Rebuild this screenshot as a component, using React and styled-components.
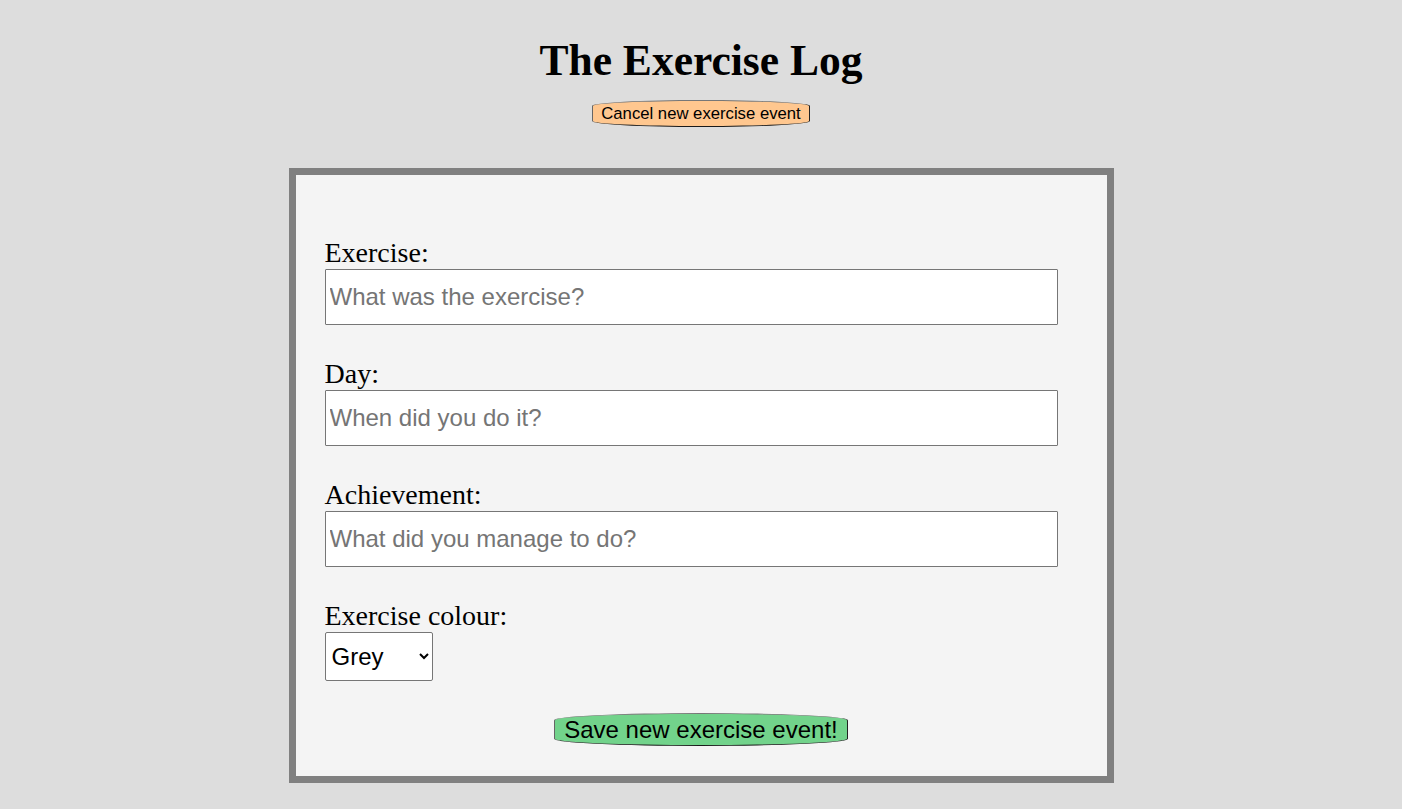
import React, { useState } from "react";
import styled, { createGlobalStyle } from "styled-components";

const GlobalStyle = createGlobalStyle`
  html, body {
    margin: 0;
    padding: 0;
    background: #dddddd;
    font-family: "Liberation Serif", "Times New Roman", serif;
  }
`;

const Page = styled.div`
  display: flex;
  flex-direction: column;
  align-items: center;
  min-height: 809px;
`;

const Title = styled.h1`
  margin: 36px 0 15px;
  font-size: 43.5px;
  font-weight: bold;
  line-height: 49px;
  color: #000;
`;

const PillButton = styled.button`
  font-family: "Liberation Sans", Arial, sans-serif;
  font-size: ${(p) => (p.$big ? "24px" : "16.7px")};
  line-height: ${(p) => (p.$big ? "28px" : "19px")};
  padding: ${(p) => (p.$big ? "1.5px 9px" : "3px 8.5px")};
  background: ${(p) => p.$bg};
  color: #000;
  border-style: solid;
  border-width: 1px 1.5px 1.5px 1px;
  border-color: #777 #222 #1a1a1a #666;
  border-radius: 50% / 22%;
  cursor: pointer;
`;

const FormBox = styled.form`
  box-sizing: border-box;
  width: 825px;
  margin-top: 41px;
  padding: 29px 49px 30px 29px;
  background: #f4f4f4;
  border: 7px solid #808080;
  display: flex;
  flex-direction: column;
`;

const Field = styled.div`
  display: flex;
  flex-direction: column;
  align-items: flex-start;
  margin-top: 33px;
`;

const Label = styled.label`
  font-size: 28px;
  line-height: 32px;
  color: #000;
`;

const TextInput = styled.input`
  box-sizing: border-box;
  width: 733px;
  height: 56px;
  padding: 0 4px;
  font-family: "Liberation Sans", Arial, sans-serif;
  font-size: 24px;
  background: #fff;
  border: 1px solid #767676;
  border-radius: 1px;
  outline: none;
  &::placeholder {
    color: #757575;
  }
`;

const ColourSelect = styled.select`
  box-sizing: border-box;
  width: 108px;
  height: 49px;
  padding: 0 2px;
  font-family: "Liberation Sans", Arial, sans-serif;
  font-size: 24px;
  color: #000;
  background: #fff;
  border: 1px solid #767676;
  border-radius: 2px;
`;

const Actions = styled.div`
  display: flex;
  justify-content: center;
  margin-top: 32px;
  padding-left: 20px;
`;

export default function App() {
  const [colour, setColour] = useState("grey");

  return (
    <Page>
      <GlobalStyle />
      <Title>The Exercise Log</Title>
      <PillButton type="button" $bg="#ffc78f">
        Cancel new exercise event
      </PillButton>
      <FormBox onSubmit={(e) => e.preventDefault()}>
        <Field>
          <Label htmlFor="exercise">Exercise:</Label>
          <TextInput id="exercise" placeholder="What was the exercise?" />
        </Field>
        <Field>
          <Label htmlFor="day">Day:</Label>
          <TextInput id="day" placeholder="When did you do it?" />
        </Field>
        <Field>
          <Label htmlFor="achievement">Achievement:</Label>
          <TextInput id="achievement" placeholder="What did you manage to do?" />
        </Field>
        <Field>
          <Label htmlFor="colour">Exercise colour:</Label>
          <ColourSelect
            id="colour"
            value={colour}
            onChange={(e) => setColour(e.target.value)}
          >
            <option value="grey">Grey</option>
            <option value="red">Red</option>
            <option value="green">Green</option>
            <option value="blue">Blue</option>
          </ColourSelect>
        </Field>
        <Actions>
          <PillButton type="submit" $big $bg="#72d38b">
            Save new exercise event!
          </PillButton>
        </Actions>
      </FormBox>
    </Page>
  );
}
